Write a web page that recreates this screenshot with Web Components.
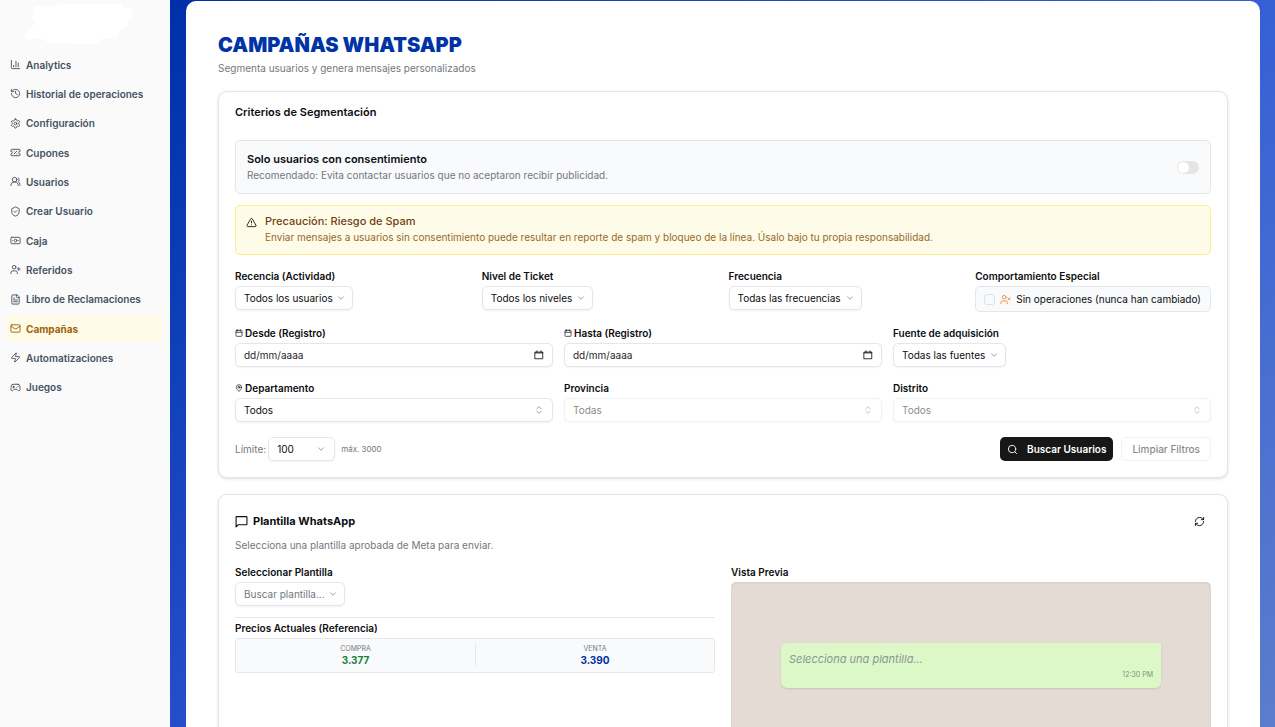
<!DOCTYPE html>
<html lang="es">
<head>
<meta charset="utf-8">
<meta name="viewport" content="width=device-width, initial-scale=1">
<title>Campañas WhatsApp</title>
<style>
  :root {
    --border: #e4e6e9;
    --text: #0c0d10;
    --muted: #74777d;
    --brand: #0033a5;
    --soft: #f9fafb;
  }
  body {
    margin: 0;
    font-family: Inter, "Open Sans", sans-serif;
    font-size: 10px;
    line-height: 14px;
    color: var(--text);
  }
</style>
</head>
<body>
<app-shell>
  <side-nav slot="nav"></side-nav>
  <page-heading>
    CAMPAÑAS WHATSAPP
    <span slot="subtitle">Segmenta usuarios y genera mensajes personalizados</span>
  </page-heading>
  <segment-card></segment-card>
  <template-card></template-card>
</app-shell>

<script>
const ICONS = {
  chart: '<path d="M3 3v16a2 2 0 0 0 2 2h16M18 17V9M13 17V5M8 17v-3"/>',
  history: '<path d="M3 12a9 9 0 1 0 9-9 9.75 9.75 0 0 0-6.74 2.74L3 8"/><path d="M3 3v5h5M12 7v5l4 2"/>',
  settings: '<path d="M12.22 2h-.44a2 2 0 0 0-2 2v.18a2 2 0 0 1-1 1.73l-.43.25a2 2 0 0 1-2 0l-.15-.08a2 2 0 0 0-2.73.73l-.22.38a2 2 0 0 0 .73 2.73l.15.1a2 2 0 0 1 1 1.72v.51a2 2 0 0 1-1 1.74l-.15.09a2 2 0 0 0-.73 2.73l.22.38a2 2 0 0 0 2.73.73l.15-.08a2 2 0 0 1 2 0l.43.25a2 2 0 0 1 1 1.73V20a2 2 0 0 0 2 2h.44a2 2 0 0 0 2-2v-.18a2 2 0 0 1 1-1.73l.43-.25a2 2 0 0 1 2 0l.15.08a2 2 0 0 0 2.73-.73l.22-.39a2 2 0 0 0-.73-2.73l-.15-.08a2 2 0 0 1-1-1.74v-.5a2 2 0 0 1 1-1.74l.15-.09a2 2 0 0 0 .73-2.73l-.22-.38a2 2 0 0 0-2.73-.73l-.15.08a2 2 0 0 1-2 0l-.43-.25a2 2 0 0 1-1-1.73V4a2 2 0 0 0-2-2z"/><circle cx="12" cy="12" r="3"/>',
  ticket: '<path d="M2 9a3 3 0 1 1 0 6v2a2 2 0 0 0 2 2h16a2 2 0 0 0 2-2v-2a3 3 0 1 1 0-6V7a2 2 0 0 0-2-2H4a2 2 0 0 0-2 2Z"/><path d="M9 9h.01M15 9l-6 6M15 15h.01"/>',
  users: '<path d="M18 21a8 8 0 0 0-16 0"/><circle cx="10" cy="8" r="5"/><path d="M22 20c0-3.37-2-6.5-4-8a5 5 0 0 0-.45-8.3"/>',
  shield: '<path d="M20 13c0 5-3.5 7.5-7.66 8.95a1 1 0 0 1-.67-.01C7.5 20.5 4 18 4 13V6a1 1 0 0 1 1-1c2 0 4.5-1.2 6.24-2.72a1.17 1.17 0 0 1 1.52 0C14.51 3.81 17 5 19 5a1 1 0 0 1 1 1z"/><path d="m9 12 2 2 4-4"/>',
  banknote: '<rect width="20" height="14" x="2" y="5" rx="2"/><circle cx="12" cy="12" r="3"/><path d="M6 12h.01M18 12h.01"/>',
  userPlus: '<path d="M16 21v-2a4 4 0 0 0-4-4H6a4 4 0 0 0-4 4v2"/><circle cx="9" cy="7" r="4"/><path d="M19 8v6M22 11h-6"/>',
  userX: '<path d="M16 21v-2a4 4 0 0 0-4-4H6a4 4 0 0 0-4 4v2"/><circle cx="9" cy="7" r="4"/><path d="m17 8 5 5M22 8l-5 5"/>',
  file: '<path d="M15 2H6a2 2 0 0 0-2 2v16a2 2 0 0 0 2 2h12a2 2 0 0 0 2-2V7Z"/><path d="M14 2v4a2 2 0 0 0 2 2h4M10 9H8M16 13H8M16 17H8"/>',
  mail: '<rect width="20" height="16" x="2" y="4" rx="2"/><path d="m22 7-8.97 5.7a1.94 1.94 0 0 1-2.06 0L2 7"/>',
  zap: '<path d="M4 14a1 1 0 0 1-.78-1.63l9.9-10.2a.5.5 0 0 1 .86.46l-1.92 6.02A1 1 0 0 0 13 10h7a1 1 0 0 1 .78 1.63l-9.9 10.2a.5.5 0 0 1-.86-.46l1.92-6.02A1 1 0 0 0 11 14z"/>',
  gamepad: '<path d="M6 11h4M8 9v4M15 12h.01M18 10h.01"/><path d="M17.32 5H6.68a4 4 0 0 0-3.978 3.59C2.604 9.416 2 14.456 2 16a3 3 0 0 0 3 3c1 0 1.5-.5 2-1l1.414-1.414A2 2 0 0 1 9.828 16h4.344a2 2 0 0 1 1.414.586L17 18c.5.5 1 1 2 1a3 3 0 0 0 3-3c0-1.545-.604-6.584-.685-7.258A4 4 0 0 0 17.32 5z"/>',
  alert: '<path d="m21.73 18-8-14a2 2 0 0 0-3.48 0l-8 14A2 2 0 0 0 4 21h16a2 2 0 0 0 1.73-3M12 9v4M12 17h.01"/>',
  calendar: '<path d="M8 2v4M16 2v4M3 10h18"/><rect width="18" height="18" x="3" y="4" rx="2"/>',
  picker: '<path d="M3 5h18v16H3zM3 7h18M7 2v3M17 2v3"/>',
  pin: '<path d="M20 10c0 5-5.54 10.2-7.4 11.8a1 1 0 0 1-1.2 0C9.54 20.2 4 15 4 10a8 8 0 0 1 16 0"/><circle cx="12" cy="10" r="3"/>',
  down: '<path d="m6 9 6 6 6-6"/>',
  upDown: '<path d="m7 15 5 5 5-5M7 9l5-5 5 5"/>',
  search: '<circle cx="11" cy="11" r="8"/><path d="m21 21-4.3-4.3"/>',
  message: '<path d="M21 3H3a1 1 0 0 0-1 1v18l4-4h15a1 1 0 0 0 1-1V4a1 1 0 0 0-1-1z"/>',
  refresh: '<path d="M3 12a9 9 0 0 1 9-9 9.75 9.75 0 0 1 6.74 2.74L21 8M21 3v5h-5M21 12a9 9 0 0 1-9 9 9.75 9.75 0 0 1-6.74-2.74L3 16M8 16H3v5"/>'
};

// box styles shared by every control
const CONTROL = `
  * { box-sizing: border-box; }
  select, input[type="text"] {
    appearance: none;
    height: 24px;
    margin: 0;
    border: 1px solid var(--border);
    border-radius: 5px;
    background: #fff;
    box-shadow: 0 1px 2px rgba(0, 0, 0, 0.05);
    color: inherit;
    font: inherit;
  }
  label { font-weight: 600; }
`;

class BaseElement extends HTMLElement {
  constructor() {
    super();
    this.attachShadow({ mode: 'open' });
  }

  connectedCallback() {
    this.shadowRoot.innerHTML = this.render();
  }
}

class UiIcon extends BaseElement {
  render() {
    return `
      <style>
        :host { display: inline-flex; flex: none; width: var(--size, 11px); height: var(--size, 11px); }
        svg { width: 100%; height: 100%; }
      </style>
      <svg viewBox="0 0 24 24" fill="none" stroke="currentColor" stroke-width="2"
        stroke-linecap="round" stroke-linejoin="round" aria-hidden="true">${ICONS[this.getAttribute('name')]}</svg>
    `;
  }
}

class AppShell extends BaseElement {
  render() {
    return `
      <style>
        :host { display: flex; height: 100vh; }
        aside { flex: none; width: 170px; background: #fafafa; }
        .stage {
          flex: 1;
          min-width: 0;
          overflow: auto;
          scrollbar-width: none;
          background: linear-gradient(135deg, #002fa7, #305cd6 55%, #5c7dcc);
        }
        main {
          display: flex;
          flex-direction: column;
          gap: 16px;
          margin: 1px 15px 16px 16px;
          padding: 32px;
          border-radius: 10px;
          background: #fff;
        }
      </style>
      <aside><slot name="nav"></slot></aside>
      <div class="stage"><main><slot></slot></main></div>
    `;
  }
}

class SideNav extends BaseElement {
  render() {
    return `
      <style>
        :host { display: block; }
        .logo { display: block; width: 112px; height: 42px; margin: 4px 0 5px 24px; }
        nav { display: grid; grid-auto-rows: 1fr; gap: 2px; min-height: 350px; padding: 0 7px 0 5px; }
      </style>
      <svg class="logo" viewBox="0 0 112 42" aria-hidden="true">
        <path fill="#fff" d="M11 2h22l4-2h60l2 4h8l2 8-5 4v6l-8 4-4 8-14 1-4 5H50l-6-1H24l-4-4H2l-1-4 7-8 4-5-4-5z"/>
      </svg>
      <nav>
        <nav-item icon="chart">Analytics</nav-item>
        <nav-item icon="history">Historial de operaciones</nav-item>
        <nav-item icon="settings">Configuración</nav-item>
        <nav-item icon="ticket">Cupones</nav-item>
        <nav-item icon="users">Usuarios</nav-item>
        <nav-item icon="shield">Crear Usuario</nav-item>
        <nav-item icon="banknote">Caja</nav-item>
        <nav-item icon="userPlus">Referidos</nav-item>
        <nav-item icon="file">Libro de Reclamaciones</nav-item>
        <nav-item icon="mail" active>Campañas</nav-item>
        <nav-item icon="zap">Automatizaciones</nav-item>
        <nav-item icon="gamepad">Juegos</nav-item>
      </nav>
    `;
  }
}

class NavItem extends BaseElement {
  render() {
    return `
      <style>
        :host { display: flex; }
        a {
          flex: 1;
          display: flex;
          align-items: center;
          gap: 5px;
          padding: 0 5px;
          border-radius: 5px;
          color: #465263;
          font-weight: 600;
          white-space: nowrap;
          text-decoration: none;
        }
        :host([active]) a { background: #fefce8; color: #a16207; font-weight: 700; }
      </style>
      <a href="#"><ui-icon name="${this.getAttribute('icon')}"></ui-icon><slot></slot></a>
    `;
  }
}

class PageHeading extends BaseElement {
  render() {
    return `
      <style>
        :host { display: block; }
        h1 { margin: 0; color: var(--brand); font-size: 20px; line-height: 24px; font-weight: 900; }
        p { margin: 4px 0 0; color: var(--muted); }
      </style>
      <h1><slot></slot></h1>
      <p><slot name="subtitle"></slot></p>
    `;
  }
}

class UiCard extends BaseElement {
  render() {
    return `
      <style>
        :host {
          display: block;
          padding: 13px 16px 16px;
          border: 1px solid var(--border);
          border-radius: 9px;
          background: #fff;
          box-shadow: 0 1px 3px rgba(0, 0, 0, 0.14);
        }
      </style>
      <slot></slot>
    `;
  }
}

class FieldSelect extends BaseElement {
  render() {
    const label = this.getAttribute('label');
    const icon = this.getAttribute('icon');
    const chevron = this.hasAttribute('wide') ? 'upDown' : 'down';
    return `
      <style>
        ${CONTROL}
        :host { display: flex; flex-direction: column; align-items: flex-start; gap: 3px; }
        :host([wide]) { align-items: stretch; }
        :host([inline]) { flex-direction: row; align-items: center; gap: 2px; }
        :host([inline]) label { color: var(--muted); font-weight: 400; }
        :host([inline]) select { width: 67px; }
        label { display: flex; align-items: center; gap: 2px; }
        label ui-icon { --size: 8px; }
        .box { display: grid; align-items: center; --size: 10px; }
        .box > * { grid-area: 1 / 1; }
        .box ui-icon { justify-self: end; margin-right: 7px; color: #8b8e94; pointer-events: none; }
        :host([wide]) .box ui-icon, :host([inline]) .box ui-icon { margin-right: 9px; }
        select { padding: 0 19px 0 8px; }
        select:disabled { opacity: 0.5; }
        select:disabled + ui-icon { opacity: 0.6; }
        :host([placeholder]) select { color: var(--muted); }
      </style>
      <label for="field">${icon ? `<ui-icon name="${icon}"></ui-icon>` : ''}${label}</label>
      <div class="box">
        <select id="field" ${this.hasAttribute('disabled') ? 'disabled' : ''}><option>${this.getAttribute('value')}</option></select>
        <ui-icon name="${chevron}"></ui-icon>
      </div>
    `;
  }
}

class FieldDate extends BaseElement {
  render() {
    return `
      <style>
        ${CONTROL}
        :host { display: flex; flex-direction: column; gap: 3px; }
        label { display: flex; align-items: center; gap: 2px; --size: 8px; }
        .box { display: grid; align-items: center; --size: 10px; }
        .box > * { grid-area: 1 / 1; }
        input { width: 100%; padding: 0 30px 0 8px; }
        input::placeholder { color: #26282c; opacity: 1; }
        button {
          display: flex;
          justify-self: end;
          margin-right: 9px;
          padding: 0;
          border: 0;
          background: none;
          color: inherit;
        }
      </style>
      <label for="date"><ui-icon name="calendar"></ui-icon>${this.getAttribute('label')}</label>
      <div class="box">
        <input id="date" type="text" inputmode="numeric" placeholder="dd/mm/aaaa">
        <button type="button" aria-label="Abrir calendario"><ui-icon name="picker"></ui-icon></button>
      </div>
    `;
  }
}

class ConsentToggle extends BaseElement {
  render() {
    return `
      <style>
        :host {
          display: flex;
          align-items: center;
          justify-content: space-between;
          padding: 10px 11px;
          border: 1px solid var(--border);
          border-radius: 5px;
          background: var(--soft);
          line-height: 16px;
        }
        label { font-size: 11px; font-weight: 600; }
        p { margin: 0; color: var(--muted); }
        input {
          appearance: none;
          display: flex;
          width: 22px;
          height: 13px;
          margin: 0;
          padding: 1px;
          box-sizing: border-box;
          border-radius: 7px;
          background: #e5e5e5;
        }
        input::before { content: ""; width: 11px; height: 11px; border-radius: 50%; background: #fff; }
        input:checked { justify-content: flex-end; background: #171717; }
      </style>
      <div>
        <label for="consent">Solo usuarios con consentimiento</label>
        <p>Recomendado: Evita contactar usuarios que no aceptaron recibir publicidad.</p>
      </div>
      <input id="consent" type="checkbox" role="switch">
    `;
  }
}

class SpamAlert extends BaseElement {
  render() {
    return `
      <style>
        :host {
          display: flex;
          gap: 8px;
          padding: 7px 10px 9px;
          border: 1px solid #fdf08a;
          border-radius: 5px;
          background: #fefce8;
          color: #713f12;
          line-height: 16px;
        }
        ui-icon { margin-top: 4px; color: #1c1c1c; }
        strong { display: block; font-size: 11px; font-weight: 500; }
        p { margin: 0; color: #946a2b; }
      </style>
      <ui-icon name="alert"></ui-icon>
      <div><strong><slot name="title"></slot></strong><p><slot></slot></p></div>
    `;
  }
}

class BehaviorCheck extends BaseElement {
  render() {
    return `
      <style>
        :host { display: flex; flex-direction: column; gap: 3px; }
        .title { font-weight: 600; }
        label {
          display: flex;
          align-items: center;
          gap: 5px;
          height: 24px;
          padding: 0 8px;
          border: 1px solid var(--border);
          border-radius: 5px;
          background: var(--soft);
          white-space: nowrap;
        }
        input {
          appearance: none;
          width: 11px;
          height: 11px;
          margin: 0;
          box-sizing: border-box;
          border: 1px solid #dfe1e4;
          border-radius: 3px;
        }
        input:checked { background: #171717; }
        ui-icon { color: #f58a3c; }
      </style>
      <span class="title">Comportamiento Especial</span>
      <label><input type="checkbox"><ui-icon name="userX"></ui-icon>Sin operaciones (nunca han cambiado)</label>
    `;
  }
}

class SegmentCard extends BaseElement {
  render() {
    return `
      <style>
        :host { display: block; }
        h2 { margin: 0 0 21px; font-size: 11px; line-height: 14px; font-weight: 600; }
        spam-alert { margin-top: 11px; }
        .row { display: grid; gap: 11px; margin-top: 14px; }
        .four { grid-template-columns: repeat(4, 1fr); }
        .three { grid-template-columns: repeat(3, 1fr); }
        footer { display: flex; align-items: center; gap: 8px; margin-top: 15px; }
        small { flex: 1; margin-left: -2px; color: var(--muted); font-size: 8px; }
        button {
          display: flex;
          align-items: center;
          gap: 9px;
          height: 24px;
          padding: 0 7px;
          border: 0;
          border-radius: 5px;
          background: #171717;
          color: #fff;
          font: inherit;
          font-weight: 600;
        }
        .ghost {
          padding: 0 10px;
          border: 1px solid var(--border);
          background: #fff;
          color: var(--text);
          font-weight: 500;
          opacity: 0.5;
        }
      </style>
      <ui-card>
        <h2>Criterios de Segmentación</h2>
        <consent-toggle></consent-toggle>
        <spam-alert>
          <span slot="title">Precaución: Riesgo de Spam</span>
          Enviar mensajes a usuarios sin consentimiento puede resultar en reporte de spam y bloqueo de la línea. Úsalo bajo tu propia responsabilidad.
        </spam-alert>
        <div class="row four">
          <field-select label="Recencia (Actividad)" value="Todos los usuarios"></field-select>
          <field-select label="Nivel de Ticket" value="Todos los niveles"></field-select>
          <field-select label="Frecuencia" value="Todas las frecuencias"></field-select>
          <behavior-check></behavior-check>
        </div>
        <div class="row three">
          <field-date label="Desde (Registro)"></field-date>
          <field-date label="Hasta (Registro)"></field-date>
          <field-select label="Fuente de adquisición" value="Todas las fuentes"></field-select>
        </div>
        <div class="row three">
          <field-select wide icon="pin" label="Departamento" value="Todos"></field-select>
          <field-select wide disabled label="Provincia" value="Todas"></field-select>
          <field-select wide disabled label="Distrito" value="Todos"></field-select>
        </div>
        <footer>
          <field-select inline label="Límite:" value="100"></field-select>
          <small>máx. 3000</small>
          <button type="button"><ui-icon name="search"></ui-icon>Buscar Usuarios</button>
          <button type="button" class="ghost" disabled>Limpiar Filtros</button>
        </footer>
      </ui-card>
    `;
  }
}

class PriceBox extends BaseElement {
  render() {
    return `
      <style>
        :host {
          display: grid;
          grid-template-columns: 1fr 1fr;
          padding: 4px 0 6px;
          border: 1px solid var(--border);
          border-radius: 3px;
          background: var(--soft);
          text-align: center;
        }
        dl { margin: 0; }
        dl + dl { border-left: 1px solid var(--border); }
        dt { color: var(--muted); font-size: 7px; line-height: 11px; }
        dd { margin: 0; color: #15803d; line-height: 12px; font-weight: 700; }
        dl + dl dd { color: var(--brand); }
      </style>
      <dl><dt>COMPRA</dt><dd>3.377</dd></dl>
      <dl><dt>VENTA</dt><dd>3.390</dd></dl>
    `;
  }
}

class ChatPreview extends BaseElement {
  render() {
    return `
      <style>
        :host {
          display: flex;
          align-items: center;
          min-height: 166px;
          padding: 0 50px;
          box-sizing: border-box;
          border-radius: 5px;
          background: #e4dcd4;
          box-shadow: inset 0 1px 3px rgba(0, 0, 0, 0.08);
        }
        .bubble {
          flex: 1;
          padding: 8px;
          border-radius: 6px 2px 6px 6px;
          background: #dcf8c6;
          box-shadow: 0 1px 2px rgba(0, 0, 0, 0.12);
        }
        p { margin: 0; color: #8b9797; font-size: 11px; line-height: 16px; font-style: italic; }
        time { display: block; margin-top: 3px; color: #83917d; font-size: 7px; line-height: 10px; text-align: right; }
      </style>
      <div class="bubble">
        <p>Selecciona una plantilla...</p>
        <time>12:30 PM</time>
      </div>
    `;
  }
}

class TemplateCard extends BaseElement {
  render() {
    return `
      <style>
        :host { display: block; }
        header { display: flex; align-items: center; justify-content: space-between; margin-top: 5px; }
        h2 { display: flex; align-items: center; gap: 5px; margin: 0; font-size: 11px; line-height: 16px; font-weight: 700; --size: 13px; }
        button { display: flex; margin-right: 6px; padding: 0; border: 0; background: none; color: inherit; }
        p { margin: 9px 0 13px; color: var(--muted); }
        .columns { display: grid; grid-template-columns: 1fr 1fr; gap: 16px; }
        h3 { margin: 0 0 3px; font-size: 10px; line-height: 14px; font-weight: 600; }
        hr { margin: 11px 0 3px; border: 0; border-top: 1px solid var(--border); }
      </style>
      <ui-card>
        <header>
          <h2><ui-icon name="message"></ui-icon>Plantilla WhatsApp</h2>
          <button type="button" aria-label="Actualizar"><ui-icon name="refresh"></ui-icon></button>
        </header>
        <p>Selecciona una plantilla aprobada de Meta para enviar.</p>
        <div class="columns">
          <section>
            <field-select placeholder label="Seleccionar Plantilla" value="Buscar plantilla..."></field-select>
            <hr>
            <h3>Precios Actuales (Referencia)</h3>
            <price-box></price-box>
          </section>
          <section>
            <h3>Vista Previa</h3>
            <chat-preview></chat-preview>
          </section>
        </div>
      </ui-card>
    `;
  }
}

customElements.define('ui-icon', UiIcon);
customElements.define('app-shell', AppShell);
customElements.define('side-nav', SideNav);
customElements.define('nav-item', NavItem);
customElements.define('page-heading', PageHeading);
customElements.define('ui-card', UiCard);
customElements.define('field-select', FieldSelect);
customElements.define('field-date', FieldDate);
customElements.define('consent-toggle', ConsentToggle);
customElements.define('spam-alert', SpamAlert);
customElements.define('behavior-check', BehaviorCheck);
customElements.define('segment-card', SegmentCard);
customElements.define('price-box', PriceBox);
customElements.define('chat-preview', ChatPreview);
customElements.define('template-card', TemplateCard);
</script>
</body>
</html>
